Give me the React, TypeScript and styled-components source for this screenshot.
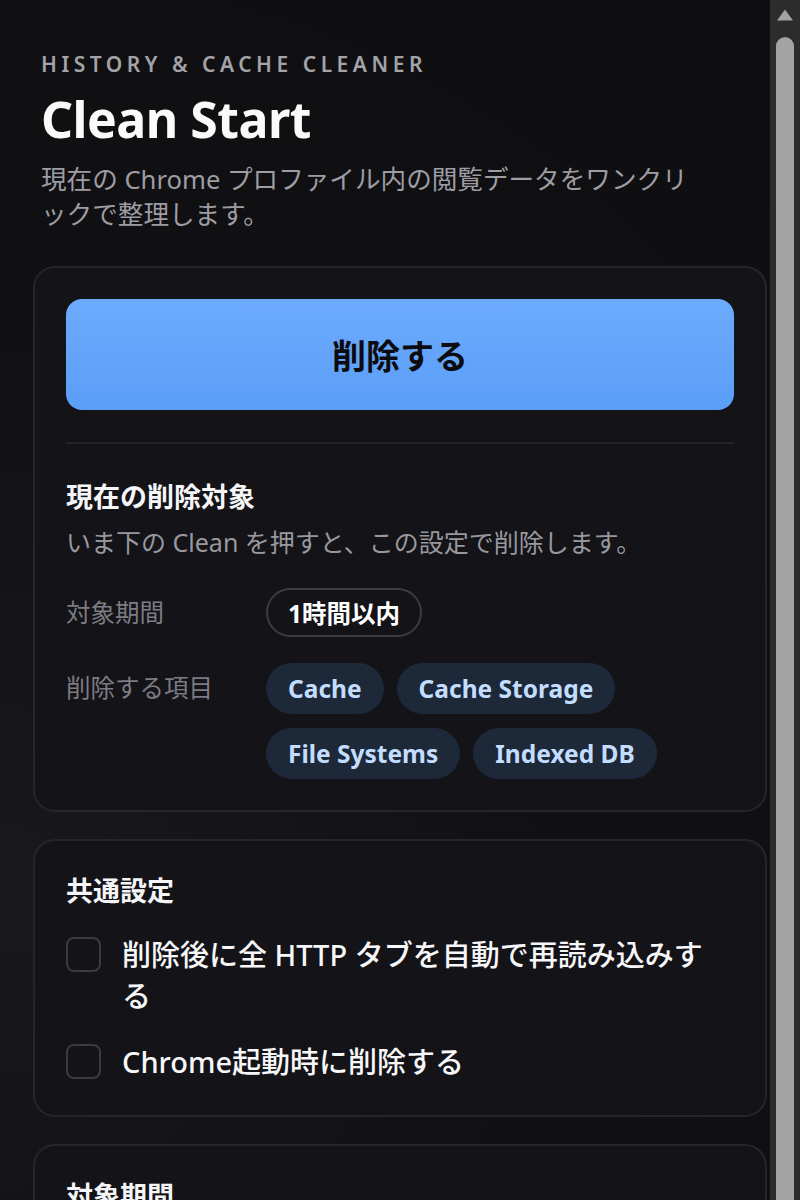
import styled, { createGlobalStyle } from "styled-components";

const GlobalStyle = createGlobalStyle`
    :root {
        color-scheme: dark;
    }

    html, body {
        margin: 0;
        padding: 0;
        background: #111114;
    }

    body {
        font-family: "Noto Sans", "Noto Sans CJK JP", sans-serif;
        color: #f4f4f6;
    }
`;

const ranges = ["1時間以内", "24時間以内", "7日以内", "4週間以内", "全期間"];
const items = ["Cache", "Cache Storage", "File Systems", "Indexed DB"];

const App = () => {
    return (
        <>
            <GlobalStyle />
            <Shell>
                <Page>
                    <Header>
                        <Eyebrow>HISTORY &amp; CACHE CLEANER</Eyebrow>
                        <Title>Clean Start</Title>
                        <Lead>現在の Chrome プロファイル内の閲覧データをワンクリックで整理します。</Lead>
                    </Header>

                    <Card>
                        <CleanButton>削除する</CleanButton>
                        <Divider />
                        <SectionTitle>現在の削除対象</SectionTitle>
                        <Note>いま下の Clean を押すと、この設定で削除します。</Note>

                        <SummaryGrid>
                            <Label>対象期間</Label>
                            <Chips>
                                <Chip $outline>1時間以内</Chip>
                            </Chips>

                            <Label>削除する項目</Label>
                            <Chips>
                                {items.map((item) => (
                                    <Chip key={item}>{item}</Chip>
                                ))}
                            </Chips>
                        </SummaryGrid>
                    </Card>

                    <Card $bottom={33}>
                        <SectionTitle>共通設定</SectionTitle>
                        <Options>
                            <Option>
                                <Box />
                                <span>削除後に全 HTTP タブを自動で再読み込みする</span>
                            </Option>
                            <Option>
                                <Box />
                                <span>Chrome起動時に削除する</span>
                            </Option>
                        </Options>
                    </Card>

                    <Card>
                        <SectionTitle>対象期間</SectionTitle>
                        <Options>
                            {ranges.map((r) => (
                                <Option key={r}>
                                    <Box />
                                    <span>{r}</span>
                                </Option>
                            ))}
                        </Options>
                    </Card>
                </Page>

                <Scrollbar>
                    <ArrowUp viewBox="0 0 18 14">
                        <path d="M9 1.5 L17 12.5 L1 12.5 Z" fill="#a3a3a3" />
                    </ArrowUp>
                    <Thumb />
                </Scrollbar>
            </Shell>
        </>
    );
};

const Shell = styled.div`
    display: flex;
    align-items: flex-start;
    background: radial-gradient(circle at 0% 55%, #19191d 0%, #111114 45%, #0e0e11 100%);
`;

const Page = styled.main`
    flex: 1;
    min-width: 0;
    padding: 48px 3px 40px 33px;
    display: flex;
    flex-direction: column;
    gap: 27px;
`;

const Scrollbar = styled.aside`
    position: sticky;
    top: 0;
    flex: none;
    width: 30px;
    height: 100vh;
    background: #2c2c2c;
    display: flex;
    flex-direction: column;
    align-items: center;
`;

const ArrowUp = styled.svg`
    width: 18px;
    height: 14px;
    margin-top: 8px;
`;

const Thumb = styled.div`
    width: 18px;
    flex: 1;
    margin-top: 15px;
    background: #a3a3a3;
    border-radius: 9px 9px 0 0;
`;

const Header = styled.header`
    padding: 0 8px;
    display: flex;
    flex-direction: column;
    margin-bottom: 7px;
`;

const Eyebrow = styled.div`
    font-size: 21px;
    font-weight: 600;
    letter-spacing: 0.215em;
    color: #a3a3a8;
    line-height: 32px;
`;

const Title = styled.h1`
    margin: 8px 0 0;
    font-size: 50px;
    font-weight: 700;
    letter-spacing: -0.5px;
    line-height: 62px;
    color: #fafafa;
`;

const Lead = styled.p`
    margin: 12px 0 0;
    max-width: 660px;
    font-size: 25.6px;
    line-height: 35px;
    color: #9d9da3;
`;

const Card = styled.section<{ $bottom?: number }>`
    background: #131318;
    border: 2px solid #25252a;
    border-radius: 22px;
    padding: 31px;
    padding-bottom: ${(p) => p.$bottom ?? 31}px;
    display: flex;
    flex-direction: column;
`;

const CleanButton = styled.button`
    height: 111px;
    border: none;
    border-radius: 16px;
    background: linear-gradient(180deg, #6cabfd 0%, #5b9ef8 100%);
    color: #0c0c10;
    font-family: inherit;
    font-size: 34px;
    font-weight: 700;
    cursor: pointer;
`;

const Divider = styled.hr`
    border: none;
    height: 2px;
    background: #222227;
    margin: 32px 0 34px;
`;

const SectionTitle = styled.h2`
    margin: 0;
    font-size: 27px;
    font-weight: 700;
    line-height: 38px;
    color: #f5f5f7;
`;

const Note = styled.p`
    margin: 10px 0 0;
    font-size: 25px;
    line-height: 32px;
    color: #98989e;
`;

const SummaryGrid = styled.div`
    display: grid;
    grid-template-columns: 200px 1fr;
    row-gap: 26px;
    margin-top: 30px;
`;

const Label = styled.div`
    font-size: 24.5px;
    line-height: 49px;
    color: #7c7c83;
`;

const Chips = styled.div`
    display: flex;
    flex-wrap: wrap;
    column-gap: 13px;
    row-gap: 14px;
`;

const Chip = styled.span<{ $outline?: boolean }>`
    display: inline-flex;
    align-items: center;
    height: ${(p) => (p.$outline ? "49px" : "51px")};
    box-sizing: border-box;
    padding: 0 20px;
    border-radius: 26px;
    font-size: 24.5px;
    font-weight: 700;
    background: ${(p) => (p.$outline ? "transparent" : "#1d2838")};
    color: ${(p) => (p.$outline ? "#ffffff" : "#c3ddff")};
    border: 2px solid ${(p) => (p.$outline ? "#3c3c41" : "transparent")};
`;

const Options = styled.div`
    display: flex;
    flex-direction: column;
    gap: 25px;
    margin-top: 24px;
`;

const Option = styled.label`
    display: flex;
    align-items: flex-start;
    gap: 21px;
    font-size: 29px;
    font-weight: 500;
    line-height: 41px;
    color: #f7f7f9;
    padding-right: 10px;
`;

const Box = styled.span`
    flex: none;
    width: 35px;
    height: 35px;
    margin-top: 3px;
    box-sizing: border-box;
    border: 2px solid #3a3a40;
    border-radius: 8px;
`;

export default App;
